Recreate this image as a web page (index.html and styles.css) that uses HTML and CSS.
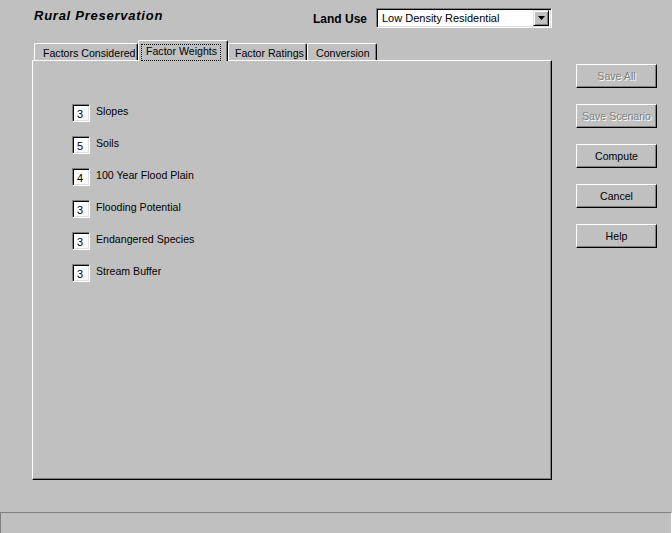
FILE: index.html
```html
<!DOCTYPE html>
<html>
<head>
<meta charset="utf-8">
<link rel="stylesheet" href="styles.css">
</head>
<body>
<div class="app">
  <div class="header">
    <div class="title">Rural Preservation</div>
    <div class="landuse">
      <span class="lu-label">Land Use</span>
      <div class="select">
        <span class="select-text">Low Density Residential</span>
        <span class="select-btn">
          <svg width="7" height="4" viewBox="0 0 7 4"><path d="M0 0h7L3.5 4z" fill="#000"/></svg>
        </span>
      </div>
    </div>
  </div>
  <div class="main">
    <div class="left">
      <div class="tabs">
        <div class="tab t1">Factors Considered</div>
        <div class="tab t2 active"><span class="focus">Factor Weights</span></div>
        <div class="tab t3">Factor Ratings</div>
        <div class="tab t4">Conversion</div>
      </div>
      <div class="panel">
        <div class="row"><span class="box">3</span><span class="lbl">Slopes</span></div>
        <div class="row"><span class="box">5</span><span class="lbl">Soils</span></div>
        <div class="row"><span class="box">4</span><span class="lbl">100 Year Flood Plain</span></div>
        <div class="row"><span class="box">3</span><span class="lbl">Flooding Potential</span></div>
        <div class="row"><span class="box">3</span><span class="lbl">Endangered Species</span></div>
        <div class="row"><span class="box">3</span><span class="lbl">Stream Buffer</span></div>
      </div>
    </div>
    <div class="buttons">
      <div class="btn disabled">Save All</div>
      <div class="btn disabled">Save Scenario</div>
      <div class="btn">Compute</div>
      <div class="btn">Cancel</div>
      <div class="btn">Help</div>
    </div>
  </div>
  <div class="status"></div>
</div>
</body>
</html>
```
FILE: styles.css
```css
* { box-sizing: border-box; }
html, body { margin: 0; padding: 0; background: #c0c0c0; }
body {
  font-family: "Liberation Sans", Arial, sans-serif;
  font-size: 10.6px;
  color: #000;
}
.app {
  width: 672px;
  height: 533px;
  display: flex;
  flex-direction: column;
  overflow: hidden;
}
.header {
  height: 40px;
  display: flex;
  padding-left: 34px;
  padding-top: 8px;
}
.title {
  width: 279px;
  font-weight: bold;
  font-style: italic;
  font-size: 13px;
  letter-spacing: 0.75px;
  line-height: 16px;
}
.landuse {
  display: flex;
  align-items: flex-start;
}
.lu-label {
  font-weight: bold;
  font-size: 12px;
  line-height: 20px;
  padding-top: 1px;
  width: 63px;
}
.select {
  width: 176px;
  height: 20px;
  background: #fff;
  border-top: 1px solid #808080;
  border-left: 1px solid #808080;
  border-right: 1px solid #fff;
  border-bottom: 1px solid #fff;
  box-shadow: inset 1px 1px 0 #000, inset -1px -1px 0 #dfdfdf;
  display: flex;
  align-items: center;
  padding: 2px 2px 2px 5px;
}
.select-text { flex: 1; line-height: 14px; font-size: 11px; }
.select-btn {
  width: 16px;
  height: 16px;
  background: #c0c0c0;
  border-top: 1px solid #dfdfdf;
  border-left: 1px solid #dfdfdf;
  border-right: 1px solid #000;
  border-bottom: 1px solid #000;
  box-shadow: inset 1px 1px 0 #fff, inset -1px -1px 0 #808080;
  display: flex;
  align-items: center;
  justify-content: center;
}
.main {
  display: flex;
  padding-left: 32px;
  height: 472px;
}
.left {
  width: 520px;
  display: flex;
  flex-direction: column;
}
.tabs {
  height: 20px;
  display: flex;
  align-items: flex-end;
  padding-left: 2px;
  position: relative;
  z-index: 1;
}
.tab {
  height: 17px;
  border-top: 1px solid #fff;
  border-left: 1px solid #fff;
  border-right: 1px solid #000;
  border-radius: 2px 2px 0 0;
  box-shadow: inset -1px 0 0 #808080;
  padding: 3px 2px 0 8px;
  line-height: 13px;
  white-space: nowrap;
  background: #c0c0c0;
  overflow: hidden;
}
.t1 { width: 104px; }
.t3 { width: 79px; padding-left: 6px; }
.t4 { width: 70px; padding-left: 8px; }
.tab.active {
  height: 21px;
  width: 90px;
  margin-bottom: -1px;
  padding: 4px 2px 0 3px;
  overflow: visible;
}
.focus {
  display: inline-block;
  outline: 1px dotted #000;
  outline-offset: 0;
  padding: 0 3px 2px 4px;
  line-height: 13px;
}
.panel {
  height: 420px;
  border-top: 1px solid #fff;
  border-left: 1px solid #fff;
  border-right: 1px solid #000;
  border-bottom: 1px solid #000;
  box-shadow: inset -1px -1px 0 #808080;
  padding: 43px 0 0 39px;
  display: flex;
  flex-direction: column;
  gap: 15px;
}
.row {
  display: flex;
  align-items: flex-start;
  height: 17px;
}
.box {
  width: 18px;
  height: 18px;
  background: #fff;
  border-top: 1px solid #808080;
  border-left: 1px solid #808080;
  border-right: 1px solid #fff;
  border-bottom: 1px solid #fff;
  box-shadow: inset 1px 1px 0 #000, inset -1px -1px 0 #dfdfdf;
  padding: 3px 0 0 4px;
  line-height: 12px;
  font-size: 11px;
}
.lbl {
  margin-left: 6px;
  line-height: 12px;
  margin-top: 1px;
}
.buttons {
  margin-left: 24px;
  padding-top: 24px;
  display: flex;
  flex-direction: column;
  gap: 16px;
}
.btn {
  width: 81px;
  height: 24px;
  border-top: 1px solid #fff;
  border-left: 1px solid #fff;
  border-right: 1px solid #000;
  border-bottom: 1px solid #000;
  box-shadow: inset -1px -1px 0 #808080;
  display: flex;
  align-items: center;
  justify-content: center;
  padding-bottom: 1px;
  white-space: nowrap;
}
.btn.disabled {
  color: #808080;
  text-shadow: 1px 1px 0 #fff;
}
.status {
  height: 21px;
  border-top: 1px solid #808080;
  border-left: 1px solid #808080;
  border-right: 1px solid #fff;
}
```
